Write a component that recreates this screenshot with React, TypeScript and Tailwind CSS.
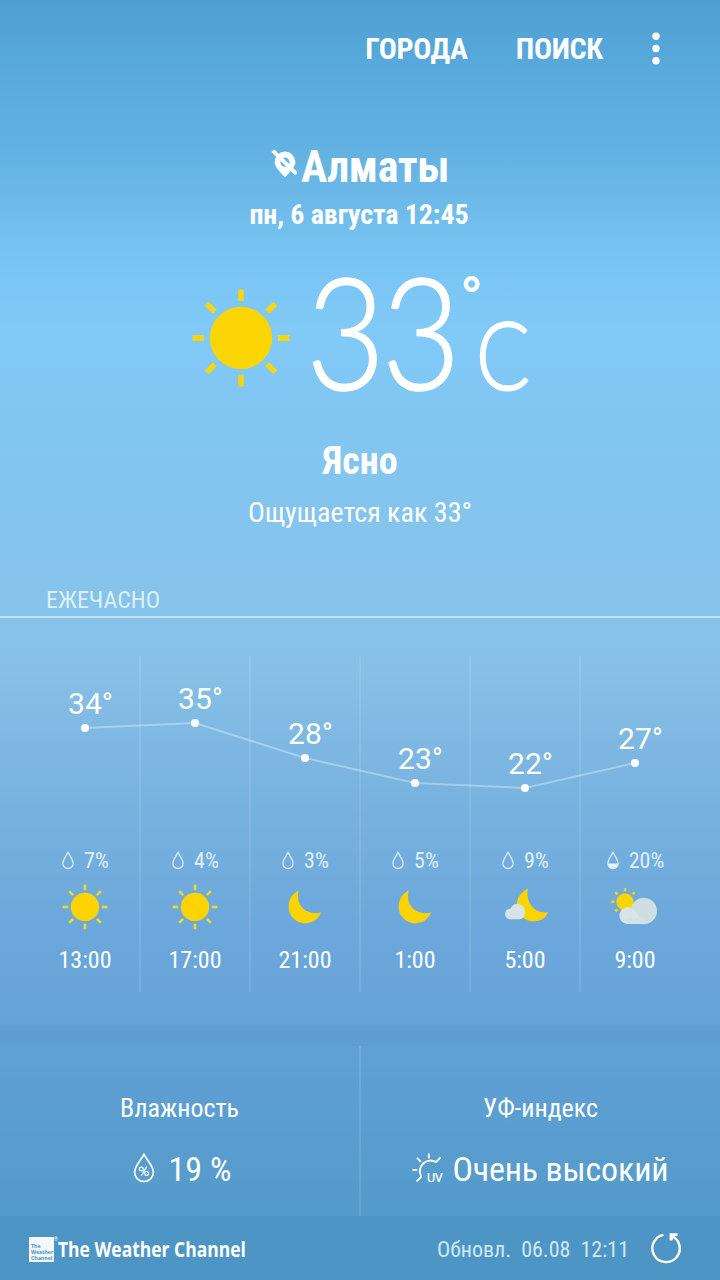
type Sky = "sun" | "moon" | "cloudyMoon" | "cloudySun";

type Hour = {
  time: string;
  temp: number;
  rain: number;
  sky: Sky;
};

const HOURS: Hour[] = [
  { time: "13:00", temp: 34, rain: 7, sky: "sun" },
  { time: "17:00", temp: 35, rain: 4, sky: "sun" },
  { time: "21:00", temp: 28, rain: 3, sky: "moon" },
  { time: "1:00", temp: 23, rain: 5, sky: "moon" },
  { time: "5:00", temp: 22, rain: 9, sky: "cloudyMoon" },
  { time: "9:00", temp: 27, rain: 20, sky: "cloudySun" },
];

const COL = 110;

// 5px per degree, measured from the top of the hourly block
const yOf = (temp: number) => 67 + (35 - temp) * 5;

const RAYS = [0, 45, 90, 135, 180, 225, 270, 315];

function Sun() {
  return (
    <svg className="shrink-0" width="98" height="98" viewBox="-49 -49 98 98">
      <circle r="31.2" fill="#fbd504" />
      {RAYS.map((a) => (
        <rect key={a} x="-2.8" y="-48.5" width="5.6" height="11.5" fill="#f6d60f" transform={`rotate(${a})`} />
      ))}
    </svg>
  );
}

function SkyIcon({ sky }: { sky: Sky }) {
  return (
    <svg width="60" height="50" viewBox="0 0 60 50">
      {sky === "sun" && (
        <g transform="translate(30 25)">
          <circle r="14.2" fill="#fdd400" />
          {RAYS.map((a) => (
            <rect key={a} x="-1.3" y="-22.4" width="2.6" height="5.6" fill="#ecd92c" transform={`rotate(${a})`} />
          ))}
        </g>
      )}
      {sky === "moon" && (
        <path d="M23.6 8.4C16.5 12 13.6 18.5 13.6 25A16.6 16.6 0 0 0 30.2 41.4C37.2 41.4 43 37.5 46.2 30.6C38 32.3 31.6 30.3 27.6 26C23.4 21.5 22 15.5 23.6 8.4Z" fill="#fdd400" />
      )}
      {sky === "cloudyMoon" && (
        <>
          <path d="M33 6.6C25.4 10.6 21.6 16.6 21.8 23.5A16.2 16.2 0 0 0 38.4 39.2C45.8 39.2 50.6 36.2 53.2 30C46.3 31.5 40.8 29 37 24.5C32.8 19.5 31.4 13.5 33 6.6Z" fill="#fdd400" />
          <path d="M14.4 37.2A5.3 5.3 0 0 1 15.4 26.7A7.6 7.6 0 0 1 29.9 28.4C30.4 32.5 29 37.2 24.2 37.2Z" fill="#d6e4e8" />
        </>
      )}
      {sky === "cloudySun" && (
        <>
          <g transform="translate(20 19.8)" fill="#fdd400">
            <circle r="8.6" />
            {[225, 270, 315, 0, 45].map((a) => (
              <rect key={a} x="-1.3" y="-13.6" width="2.6" height="3" transform={`rotate(${a})`} />
            ))}
          </g>
          <circle cx="38.8" cy="29" r="13.2" fill="#cfdfe1" />
          <path d="M22 42A8.4 8.4 0 1 1 29.5 28.5C33.5 33 36.5 37 39 42Z" fill="#d6e5e8" />
          <rect x="21" y="36" width="19" height="6" fill="#d3e2e5" />
        </>
      )}
    </svg>
  );
}

function Drop({ filled }: { filled: boolean }) {
  return (
    <svg width="12" height="19" viewBox="0 0 12 19">
      {filled && <path d="M1 12.6H11A5.1 5.1 0 0 1 6 18A5.1 5.1 0 0 1 1 12.6Z" fill="#e6f5fd" />}
      <path d="M6 1.4C4 5.2 .9 8.8 .9 12.4A5.1 5.1 0 0 0 11.1 12.4C11.1 8.8 8 5.2 6 1.4Z" fill="none" stroke="#d4ecfb" strokeWidth="1.3" />
    </svg>
  );
}

function Header() {
  return (
    <header className="flex h-[97px] items-center justify-end gap-12 pr-[60px] text-[30px] font-bold tracking-[-0.3px]">
      <span>ГОРОДА</span>
      <span>ПОИСК</span>
      <svg className="ml-px" width="8" height="34" viewBox="0 0 8 34" fill="currentColor">
        <circle cx="4" cy="4.3" r="3.7" />
        <circle cx="4" cy="16.5" r="3.7" />
        <circle cx="4" cy="28.7" r="3.7" />
      </svg>
    </header>
  );
}

function Current() {
  return (
    <section className="mt-[42px] text-center">
      <h1 className="flex h-[55px] items-center justify-center gap-1 text-[44px] font-bold tracking-[-0.4px]">
        <svg width="26" height="30" viewBox="0 0 26 30" className="mt-[-6px]">
          <path d="M14 2.6A10.4 10.4 0 0 1 24.4 13C24.4 18.4 18.8 22.6 14 28.6C9.2 22.6 3.6 18.4 3.6 13A10.4 10.4 0 0 1 14 2.6Z" fill="#fff" />
          <circle cx="14" cy="13.2" r="4.6" fill="#68b6e6" />
          <path d="M1.8 1.6L25.4 24.8" stroke="#fff" strokeWidth="3.8" />
        </svg>
        Алматы
      </h1>
      <p className="h-[41px] pr-0.5 text-[28px] leading-[41px] font-bold tracking-[-0.1px]">пн, 6 августа 12:45</p>

      <div className="flex h-[190px] items-start pl-[192px] text-left font-['Lato']">
        <div className="mt-[54px]">
          <Sun />
        </div>
        <span className="mt-[9px] ml-[16px] w-[150px] origin-left scale-x-[0.87] text-[157px] leading-[170px] font-light tracking-[-4.4px] [-webkit-text-stroke:1.6px_white]">33</span>
        <span className="mt-[24px] ml-[4px] w-5 text-center font-['Roboto'] text-[60px] leading-[80px] font-bold [font-stretch:75%]">°</span>
        <span className="mt-[68px] ml-[-4px] origin-left scale-x-[0.84] text-[95px] leading-[100px] font-light [-webkit-text-stroke:1.9px_white]">C</span>
      </div>

      <p className="h-[72px] text-[38px] leading-[72px] font-bold">Ясно</p>
      <p className="h-8 text-[28px] leading-8 font-normal">Ощущается как 33°</p>
    </section>
  );
}

function Hourly() {
  const points = HOURS.map((h, i) => [COL * i + COL / 2, yOf(h.temp)]);

  return (
    <section>
      <div className="flex h-[89px] items-end border-b-2 border-white/50 pl-[46px]">
        <h2 className="text-2xl leading-[31px] text-[#dcf0fb]">ЕЖЕЧАСНО</h2>
      </div>
      <div className="relative mt-[38px] ml-[30px] grid h-[336px] w-[660px] grid-cols-6">
        {HOURS.map((h, i) => (
          <div key={h.time} className={i < HOURS.length - 1 ? "shadow-[1px_0_0_rgba(255,255,255,0.11),inset_-1px_0_0_rgba(255,255,255,0.11)]" : ""}>
            <div className="flex h-[190px] justify-center pl-[11px]" style={{ paddingTop: yOf(h.temp) - 40 }}>
              <span className="h-8 font-['Roboto'] text-[30px] leading-8">{h.temp}°</span>
            </div>
            <div className="flex h-7 items-center justify-center gap-2.5 pl-px text-[22px] text-[#dff2fd]">
              <Drop filled={h.rain >= 20} />
              <span className="pt-0.5 leading-7">{h.rain}%</span>
            </div>
            <div className="mt-[8px] flex h-[50px] justify-center">
              <SkyIcon sky={h.sky} />
            </div>
            <div className="mt-[12px] text-center text-2xl leading-8">{h.time}</div>
          </div>
        ))}
        <svg className="absolute top-0 left-0" width="660" height="190">
          <polyline points={points.map((p) => p.join(",")).join(" ")} fill="none" stroke="#fff" strokeOpacity="0.33" strokeWidth="2" />
          {points.map(([x, y]) => (
            <circle key={x} cx={x} cy={y} r="4.1" fill="#fff" />
          ))}
        </svg>
      </div>
    </section>
  );
}

function Details() {
  return (
    <section className="mt-[34px] border-t-[20px] border-[#5f9ecf]/80">
      <div className="grid h-[170px] grid-cols-2">
        <div className="border-r border-white/10 pt-[45px] text-center">
          <h3 className="text-[26px] leading-[34px]">Влажность</h3>
          <div className="mt-[24px] flex h-10 items-center justify-center gap-[14px] pl-[5px] text-[34px]">
            <svg className="-mt-0.5" width="22" height="30" viewBox="0 0 22 30" fill="none" stroke="#fff">
              <path d="M11 1.4C8 7 1.6 13 1.6 19.2A9.4 9.3 0 0 0 20.4 19.2C20.4 13 14 7 11 1.4Z" strokeWidth="1.7" />
              <circle cx="8.3" cy="16" r="1.9" strokeWidth="1.2" />
              <circle cx="13.6" cy="20.4" r="1.9" strokeWidth="1.2" />
              <path d="M13.7 13.6L8.4 22.8" strokeWidth="1.2" />
            </svg>
            19 %
          </div>
        </div>
        <div className="border-l border-white/10 pt-[45px] text-center">
          <h3 className="text-[26px] leading-[34px]">УФ-индекс</h3>
          <div className="mt-[24px] flex h-10 items-center justify-center gap-2 text-[34px] tracking-[-0.15px]">
            <svg className="-mt-0.5 overflow-visible" width="32" height="30" viewBox="0 0 32 30" fill="none" stroke="#fff" strokeWidth="1.8">
              <path d="M24.4 9.2A10.8 10.8 0 0 0 9.2 23.6" />
              <path d="M16.8 .6V5.4M28.6 4.4L23.8 9.4M5 4.8L8.9 8.9M.4 16.8H5.4M9.6 23.4L4.6 28.4" />
              <text x="15" y="28.6" fontSize="12.5" fill="#fff" stroke="#fff" strokeWidth="0.2" letterSpacing="-0.3" className="font-['Roboto']">UV</text>
            </svg>
            Очень высокий
          </div>
        </div>
      </div>
    </section>
  );
}

function Footer() {
  return (
    <footer className="flex h-16 items-center bg-[#4890bd]/50 pt-[2px] pr-[38px] pl-[29px] whitespace-nowrap">
      <div className="flex h-[25px] w-[25px] flex-col justify-end bg-[#f3f8fb] pb-px pl-[2px] font-['Open_Sans'] text-[5.2px] leading-[6px] font-bold text-[#4b94c2]">
        <span>The</span>
        <span>Weather</span>
        <span>Channel</span>
      </div>
      <span className="-mt-5 w-[4px] text-[5px] leading-none">®</span>
      <span className="w-[188px] origin-left scale-x-[0.852] pt-px font-['Open_Sans'] text-[20.5px] font-bold">The Weather Channel</span>
      <span className="ml-auto text-[22px] text-[#cde9f8] [word-spacing:5px]">Обновл. 06.08 12:11</span>
      <svg className="-mt-0.5 ml-[21px]" width="32" height="32" viewBox="0 0 32 32" fill="none" stroke="#fff" strokeWidth="2.4">
        <path d="M13.4 2.9A13.7 13.7 0 1 0 22.4 4.2" />
        <path d="M19.6 1.2H27.6V3.4L24.8 4.6L22.2 8.6H19.6Z" fill="#fff" stroke="none" />
      </svg>
    </footer>
  );
}

export default function App() {
  return (
    <div className="flex h-[1280px] w-[720px] flex-col overflow-hidden bg-[linear-gradient(180deg,#4f9fd3_0px,#57a8db_60px,#65b3e3_160px,#76c3f1_250px,#81caf8_330px,#80c6f2_410px,#87c3ea_610px,#86c0e6_670px,#78b2df_800px,#6ca8db_920px,#66a3d8_1020px,#5e9fd3_1080px,#539bca_1210px,#509bcb_1280px)] font-['Roboto_Condensed','Roboto',sans-serif] text-white">
      <Header />
      <Current />
      <Hourly />
      <Details />
      <Footer />
    </div>
  );
}
